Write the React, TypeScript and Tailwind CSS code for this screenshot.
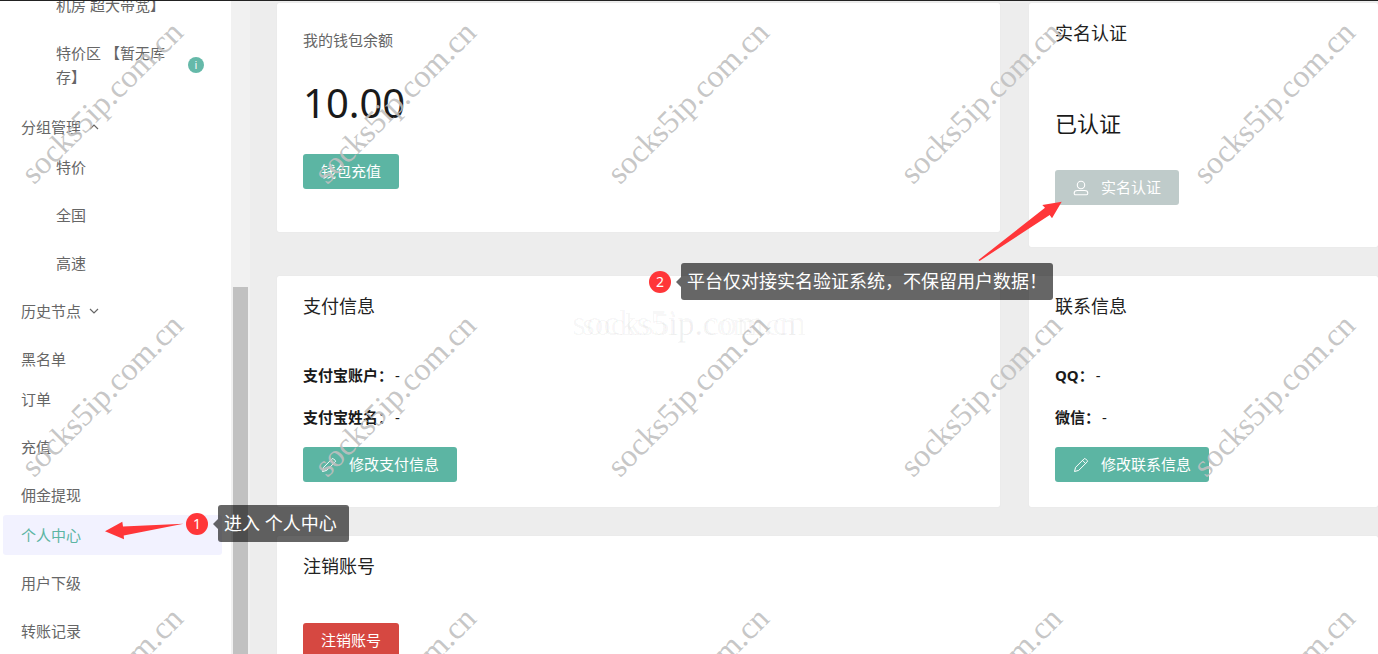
import React from 'react';

type NavItem = { label: string; child?: boolean; tight?: boolean; active?: boolean; toggle?: 'open' | 'closed' };

const navItems: NavItem[] = [
  { label: '分组管理', toggle: 'open' },
  { label: '特价', child: true, tight: true },
  { label: '全国', child: true },
  { label: '高速', child: true },
  { label: '历史节点', toggle: 'closed' },
  { label: '黑名单' },
  { label: '订单', tight: true },
  { label: '充值' },
  { label: '佣金提现' },
  { label: '个人中心', tight: true, active: true },
  { label: '用户下级' },
  { label: '转账记录' },
];

const Caret = ({ open }: { open: boolean }) => (
  <svg width="10" height="10" viewBox="0 0 10 10" fill="none" stroke="currentColor" strokeWidth="1.2">
    <path d={open ? 'M1 7 5 3 9 7' : 'M1 3 5 7 9 3'} />
  </svg>
);

const PencilIcon = () => (
  <svg width="16" height="16" viewBox="0 0 16 16" fill="none" stroke="currentColor" strokeWidth="1" strokeLinejoin="round">
    <path d="M1.5 14.5 2.6 10.3 11 1.9Q11.8 1.1 12.6 1.9L14.1 3.4Q14.9 4.2 14.1 5L5.7 13.4ZM9.5 3.4 12.6 6.5" />
  </svg>
);

const UserIcon = () => (
  <svg width="16" height="16" viewBox="0 0 16 16" fill="none" stroke="currentColor" strokeWidth="1.1">
    <circle cx="8" cy="5" r="3.7" />
    <path d="M4.2 10.5H11.8Q14.8 10.5 14.8 13.2Q14.8 14.7 13.6 14.7H2.4Q1.2 14.7 1.2 13.2Q1.2 10.5 4.2 10.5Z" />
  </svg>
);

const Card = ({ title, className = '', children }: { title?: string; className?: string; children: React.ReactNode }) => (
  <section className={`rounded-xs bg-white px-[26px] shadow-[0_0_1px_rgba(0,0,0,0.1)] ${className}`}>
    {title && <h2 className="pt-4 text-[18px] leading-7 text-[#222]">{title}</h2>}
    {children}
  </section>
);

const Button = ({ tone = 'primary', icon, children }: { tone?: 'primary' | 'muted' | 'danger'; icon?: React.ReactNode; children: React.ReactNode }) => {
  const tones = {
    primary: 'bg-[#5cb5a3]',
    muted: 'bg-[#bfcbca]',
    danger: 'bg-[#d64841]',
  };
  return (
    <button
      type="button"
      disabled={tone === 'muted'}
      className={`flex h-[35px] items-center gap-3 rounded-[3px] px-[18px] text-[15px] text-white ${tones[tone]}`}
    >
      {icon}
      <span>{children}</span>
    </button>
  );
};

const Field = ({ label }: { label: string }) => (
  <div className="flex gap-0.5 leading-6">
    <dt className="font-bold">{label}：</dt>
    <dd>-</dd>
  </div>
);

const Callout = ({ step, className, children }: { step: number; className: string; children: React.ReactNode }) => (
  <div className="flex items-center">
    <span className="flex size-[22px] items-center justify-center rounded-full bg-[#ff3639] text-[14px] text-white">{step}</span>
    <span className="ml-[5px] border-y-5 border-r-5 border-y-transparent border-r-black/60" />
    <span className={`h-[37px] rounded-[3px] bg-black/60 pl-[6px] text-[18px] leading-9 whitespace-nowrap text-white ${className}`}>{children}</span>
  </div>
);

const Sidebar = () => (
  <aside className="flex w-[250px] shrink-0 overflow-hidden">
    <nav className="-mt-4 w-[231px] pr-[9px] pl-[3px] text-[15px] text-[#666]">
      <a href="#room" className="flex h-10 items-center pl-[53px]">机房 超大带宽】</a>
      <a href="#special" className="mt-2 flex items-center justify-between py-2 pr-[18px] pl-[53px] leading-6">
        <span className="w-[118px]">特价区 【暂无库存】</span>
        <span className="flex size-4 items-center justify-center rounded-full bg-[#65b9a9] text-[11px] leading-4 text-white">i</span>
      </a>
      <ul className="pt-0.5">
        {navItems.map((item) => (
          <li key={item.label} className={item.tight ? '' : 'mt-2'}>
            {item.toggle ? (
              <button type="button" aria-expanded={item.toggle === 'open'} className="flex h-10 w-full items-center gap-2 pl-[18px]">
                {item.label}
                <Caret open={item.toggle === 'open'} />
              </button>
            ) : (
              <a
                href="#nav"
                className={`flex h-10 items-center rounded-[3px] ${item.child ? 'pl-[53px]' : 'pl-[18px]'} ${item.active ? 'bg-[#f2f2ff] text-[#5cb5a3]' : ''}`}
              >
                {item.label}
              </a>
            )}
          </li>
        ))}
      </ul>
    </nav>
    {/* scroll track */}
    <div className="w-[19px] bg-[#f1f1f1] px-[2px] pt-[286px]">
      <div className="h-full bg-[#c1c1c1]" />
    </div>
  </aside>
);

const Watermark = () => (
  <div aria-hidden="true" className="pointer-events-none absolute inset-0 overflow-hidden font-['Liberation_Serif',serif] text-[32px] leading-none">
    <div className="absolute inset-0 grid place-items-center pb-2 text-black/4">
      <span className="col-start-1 row-start-1">socks5ip.com.cn</span>
      <span className="col-start-1 row-start-1 text-[35px]">socks5ip.com.cn</span>
    </div>
    <div className="absolute -top-[46px] -left-[45px] grid auto-rows-[293px] grid-cols-[repeat(5,293px)] place-items-center text-[#c0c0c0]/90">
      {Array.from({ length: 15 }, (_, i) => (
        <span key={i} className="-rotate-45">socks5ip.com.cn</span>
      ))}
    </div>
  </div>
);

export default function App() {
  return (
    <div className="relative flex h-screen overflow-hidden border-t border-[#222] bg-white font-['Noto_Sans','Noto_Sans_CJK_SC',sans-serif] text-[15px] text-[#1a1a1a]">
      <Sidebar />

      <main className="min-w-0 flex-1 bg-[#ededed] pt-0.5 pl-[27px]">
        <div className="grid grid-cols-[29fr_14fr] items-start gap-[29px]">
          <Card className="pt-[25px] pb-[43px]">
            <p className="leading-6 text-[#666]">我的钱包余额</p>
            <p className="mt-[27px] mb-[27px] text-[40px] leading-12">10.00</p>
            <Button>钱包充值</Button>
          </Card>

          <Card title="实名认证" className="pb-[42px]">
            <p className="mt-[60px] mb-[31px] text-[22px] leading-8">已认证</p>
            <Button tone="muted" icon={<UserIcon />}>实名认证</Button>
          </Card>

          <Card title="支付信息" className="pb-[25px]">
            <dl className="mt-[43px] mb-[18px] space-y-[18px]">
              <Field label="支付宝账户" />
              <Field label="支付宝姓名" />
            </dl>
            <Button icon={<PencilIcon />}>修改支付信息</Button>
          </Card>

          <Card title="联系信息" className="pb-[25px]">
            <dl className="mt-[43px] mb-[18px] space-y-[18px]">
              <Field label="QQ" />
              <Field label="微信" />
            </dl>
            <Button icon={<PencilIcon />}>修改联系信息</Button>
          </Card>

          <Card title="注销账号" className="col-span-2 pb-[43px]">
            <div className="mt-[43px]">
              <Button tone="danger">注销账号</Button>
            </div>
          </Card>
        </div>
      </main>

      {/* Guide steps over the page */}
      <div className="absolute top-[504px] left-[186px]">
        <Callout step={1} className="pr-3">进入 个人中心</Callout>
      </div>
      <div className="absolute top-[262px] left-[649px]">
        <Callout step={2} className="pr-[6px]">平台仅对接实名验证系统，不保留用户数据！</Callout>
      </div>
      <svg className="absolute top-[520px] left-[104px]" width="80" height="20" viewBox="0 0 80 20" fill="#ff3639">
        <path d="M1 10.3 18.3.7 19 5.4 79.5 2.8 19.7 14.5 20 18.3Z" />
      </svg>
      <svg className="absolute top-[200px] left-[978px]" width="85" height="61" viewBox="0 0 85 61" fill="#ff3639">
        <path d="M83.7.7 64.3 4 67 6.7.5 59 1.5 60 71.7 14 74 17.3Z" />
      </svg>

      <Watermark />
    </div>
  );
}
